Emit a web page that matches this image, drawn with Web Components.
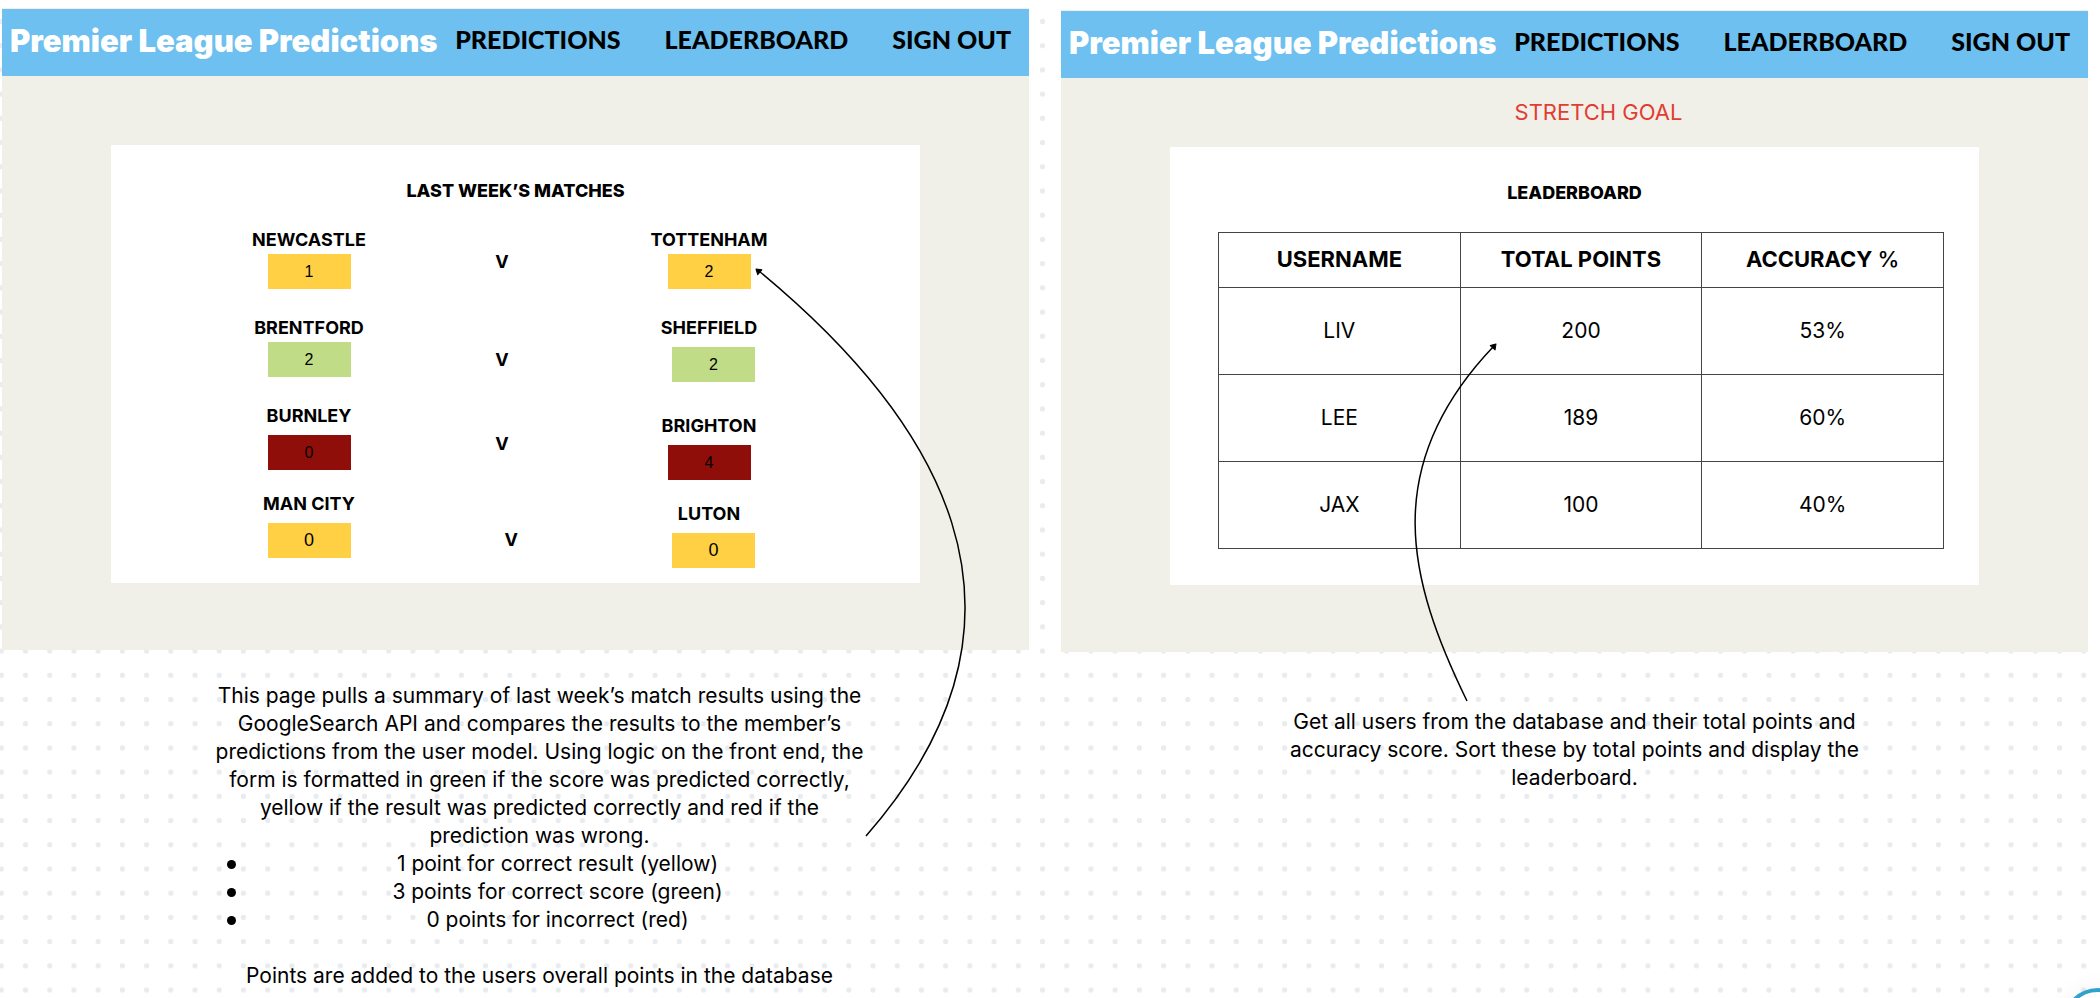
<!DOCTYPE html>
<html lang="en">
<head>
<meta charset="utf-8">
<meta name="viewport" content="width=device-width, initial-scale=1">
<title>Premier League Predictions – wireframes</title>
<style>
  html, body { margin: 0; background: #fff; color: #000; font-family: Inter, "Liberation Sans", sans-serif; }
</style>
</head>
<body>
<wire-canvas>
  <wire-frame>
    <app-board>
      <board-card heading="LAST WEEK’S MATCHES"><match-list></match-list></board-card>
    </app-board>
    <frame-note class="results">
      <p>This page pulls a summary of last week’s match results using the GoogleSearch API and compares the results to the member’s predictions from the user model. Using logic on the front end, the form is formatted in green if the score was predicted correctly, yellow if the result was predicted correctly and red if the prediction was wrong.</p>
      <ul>
        <li><span>1 point for correct result (yellow)</span></li>
        <li><span>3 points for correct score (green)</span></li>
        <li><span>0 points for incorrect (red)</span></li>
      </ul>
      <p>Points are added to the users overall points in the database</p>
    </frame-note>
    <flow-arrow path="M864 828C1062 602 930 406 757 263" tip="754 261" angle="-139"></flow-arrow>
  </wire-frame>
  <wire-frame class="second">
    <app-board>
      <span slot="banner">STRETCH GOAL</span>
      <board-card heading="LEADERBOARD"><leader-table></leader-table></board-card>
    </app-board>
    <frame-note class="leaders">
      <p>Get all users from the database and their total points and accuracy score. Sort these by total points and display the leaderboard.</p>
    </frame-note>
    <flow-arrow path="M406 691C347 570 318 457 432 337" tip="435 334" angle="-48"></flow-arrow>
  </wire-frame>
  <help-button></help-button>
</wire-canvas>

<script>
const define = (name, html, setup) => customElements.define(name, class extends HTMLElement {
  connectedCallback() {
    if (this.shadowRoot) return;
    const root = this.attachShadow({ mode: 'open' });
    root.innerHTML = html;
    if (setup) setup(root, this);
  }
});

/* Dotted canvas that holds the wireframes side by side */
define('wire-canvas', `
<style>
  :host { display: block; position: relative; z-index: 0; min-height: 100vh; overflow: hidden; box-sizing: border-box; padding: 8px 12px 8px 2px; }
  .grid { display: grid; grid-template-columns: 1fr 1fr; gap: 32px; align-items: start; }
  svg { position: absolute; inset: 0; width: 100%; height: 100%; z-index: -1; }
</style>
<svg aria-hidden="true">
  <defs><pattern id="dots" width="24.214" height="24.214" x="-10.8" y="9.4" patternUnits="userSpaceOnUse">
    <circle cx="12.107" cy="12.107" r="2.6" fill="#e8ebef"/>
  </pattern></defs>
  <rect y="12" width="100%" height="100%" fill="url(#dots)"/>
</svg>
<div class="grid"><slot></slot></div>`);

define('wire-frame', `
<style>
  :host { display: block; position: relative; min-width: 0; }
  :host(.second) { margin-top: 2px; }
</style>
<slot></slot>`);

/* One app screen: nav bar, banner strip and a content card */
define('app-board', `
<style>
  :host { display: block; background: #f1f0e8; padding: 1px 0 67px; }
  header { display: flex; align-items: center; justify-content: space-between; height: 67px; padding: 0 18px 0 8px; background: #6dc0ef; }
  a { color: #000; text-decoration: none; }
  .brand { color: #fff; font-weight: 900; font-size: 31px; line-height: 40px; padding-bottom: 3px; white-space: nowrap; }
  nav { display: flex; gap: 44px; font: 900 25px/40px Lato, sans-serif; padding-bottom: 7px; white-space: nowrap; }
  .banner { display: flex; align-items: center; justify-content: center; height: 67px; padding: 0 0 2px 48px; color: #e23d33; font-size: 22px; }
  main { display: block; margin: 0 109px; }
</style>
<header>
  <a class="brand" href="#">Premier League Predictions</a>
  <nav><a href="#predictions">PREDICTIONS</a><a href="#leaderboard">LEADERBOARD</a><a href="#signout">SIGN OUT</a></nav>
</header>
<div class="banner"><slot name="banner"></slot></div>
<main><slot></slot></main>`);

define('board-card', `
<style>
  :host { display: block; background: #fff; padding-top: 36px; }
  h2 { margin: 0 0 29px; text-align: center; font-size: 18px; line-height: 20px; font-weight: 800; }
</style>
<h2></h2><slot></slot>`, (root, el) => {
  root.querySelector('h2').textContent = el.getAttribute('heading');
});

/* A team name over its predicted score */
define('team-score', `
<style>
  :host { display: flex; flex-direction: column; align-items: center; gap: 4px; }
  :host([loose]) { gap: 9px; }
  label { font-size: 18px; line-height: 20px; font-weight: 700; white-space: nowrap; }
  .box { width: 92px; display: flex; justify-content: center; }
  :host([end]) .box { justify-content: flex-end; }
  input { box-sizing: border-box; width: 83px; height: 35px; margin: 0; padding: 0; border: 0; border-radius: 0; outline: 0; text-align: center; color: #000; font: 16px "Liberation Sans", Arial, sans-serif; background: var(--tone); }
  :host([large]) input { font-size: 18px; }
</style>
<label for="score"></label>
<div class="box"><input id="score" inputmode="numeric"></div>`, (root, el) => {
  const tones = { yellow: '#ffd044', green: '#c0dc86', red: '#900e0a' };
  root.querySelector('label').textContent = el.getAttribute('team');
  const input = root.querySelector('input');
  input.setAttribute('value', el.getAttribute('score'));
  input.style.setProperty('--tone', tones[el.getAttribute('tone')]);
});

define('match-list', `
<style>
  :host { display: grid; grid-template-columns: 138fr 120px 117fr 32px 131fr 120px 151fr; padding-bottom: 15px; }
  form { display: contents; }
  .home { grid-column: 2; display: grid; grid-template-rows: 88px 88px 88px auto; align-content: start; }
  .versus { grid-column: 4; display: grid; grid-template-rows: 98px 84px 96px auto; align-content: start; justify-items: center; padding-top: 22px; font-size: 18px; line-height: 20px; font-weight: 700; }
  .versus :last-child { justify-self: end; }
  .away { grid-column: 6; display: grid; grid-template-rows: 88px 98px 88px auto; align-content: start; }
</style>
<form>
  <div class="home">
    <team-score team="NEWCASTLE" score="1" tone="yellow"></team-score>
    <team-score team="BRENTFORD" score="2" tone="green"></team-score>
    <team-score team="BURNLEY" score="0" tone="red" loose></team-score>
    <team-score team="MAN CITY" score="0" tone="yellow" loose large></team-score>
  </div>
  <div class="versus"><span>V</span><span>V</span><span>V</span><span>V</span></div>
  <div class="away">
    <team-score team="TOTTENHAM" score="2" tone="yellow"></team-score>
    <team-score team="SHEFFIELD" score="2" tone="green" loose end></team-score>
    <team-score team="BRIGHTON" score="4" tone="red" loose></team-score>
    <team-score team="LUTON" score="0" tone="yellow" loose end large></team-score>
  </div>
</form>`);

define('leader-table', `
<style>
  :host { display: block; padding: 0 35px 36px 48px; }
  table { width: 100%; border-collapse: collapse; table-layout: fixed; }
  th, td { border: 1px solid #444; padding: 0 0 2px; text-align: center; font-size: 21px; height: 84px; }
  th { height: 52px; font-size: 22px; font-weight: 700; }
  th span { font-weight: 500; }
</style>
<table>
  <thead><tr><th scope="col">USERNAME</th><th scope="col">TOTAL POINTS</th><th scope="col">ACCURACY <span>%</span></th></tr></thead>
  <tbody>
    <tr><td>LIV</td><td>200</td><td>53%</td></tr>
    <tr><td>LEE</td><td>189</td><td>60%</td></tr>
    <tr><td>JAX</td><td>100</td><td>40%</td></tr>
  </tbody>
</table>`);

/* Annotation below a board */
define('frame-note', `
<style>
  :host { display: block; font-size: 21px; line-height: 28px; text-align: center; }
  :host(.results) { padding: 32px 0 0 48px; }
  :host(.leaders) { padding-top: 56px; }
  .text { margin: 0 auto; max-width: 652px; }
  :host(.leaders) .text { max-width: 600px; }
  ::slotted(p) { margin: 0; }
  ::slotted(ul) { margin: 0 0 28px; padding: 0; list-style: none; }
</style>
<div class="text"><slot></slot></div>`, (root, el) => {
  el.querySelectorAll('li').forEach(li => {
    const item = document.createElement('note-point');
    item.append(...li.childNodes);
    li.append(item);
  });
});

define('note-point', `
<style>
  :host { display: grid; grid-template-columns: 36px 1fr; align-items: center; }
  i { width: 9px; height: 9px; border-radius: 50%; background: #000; justify-self: center; }
</style>
<i></i><slot></slot>`);

/* Curved pointer from a note to the part of the board it explains */
define('flow-arrow', `
<style>
  :host { position: absolute; left: 0; top: 0; pointer-events: none; }
  svg { display: block; overflow: visible; }
</style>
<svg width="1" height="1" aria-hidden="true">
  <path class="line" fill="none" stroke="#000" stroke-width="1.5"/>
  <path class="head" d="M0 0L-5 -3.2L-5 3.2Z" stroke="#000" stroke-width="1" stroke-linejoin="round"/>
</svg>`, (root, el) => {
  root.querySelector('.line').setAttribute('d', el.getAttribute('path'));
  root.querySelector('.head').setAttribute('transform', `translate(${el.getAttribute('tip')}) rotate(${el.getAttribute('angle')})`);
});

define('help-button', `
<style>
  :host { position: fixed; right: -34px; bottom: -62px; }
  button { display: block; width: 72px; height: 72px; padding: 0; border: 4px solid #31a2cd; border-radius: 50%; background: #fff; box-shadow: 0 0 24px rgba(0, 0, 0, .05); }
</style>
<button type="button" aria-label="Help"></button>`);
</script>
</body>
</html>
